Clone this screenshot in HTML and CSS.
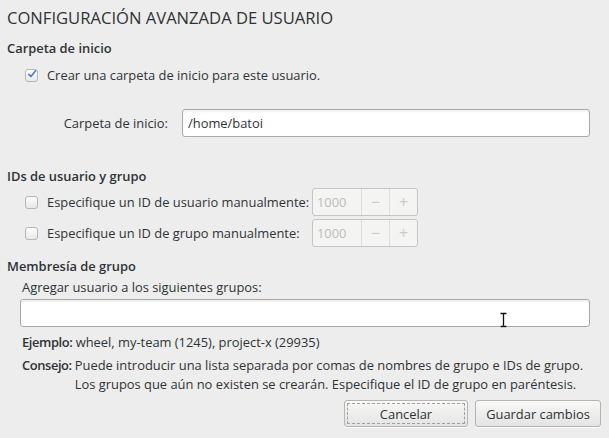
FILE: index.html
```html
<!DOCTYPE html>
<html lang="es">
<head>
<meta charset="utf-8">
<link rel="stylesheet" href="styles.css">
</head>
<body>
<div class="dialog">
  <h1 class="title">CONFIGURACIÓN AVANZADA DE USUARIO</h1>

  <h2 class="section">Carpeta de inicio</h2>
  <label class="check-row home-check">
    <span class="check checked">
      <svg viewBox="0 0 14 14" width="14" height="14"><path d="M2.5 7.5 L5.5 10.5 L12 2.5" fill="none" stroke="#3a7bd5" stroke-width="2.2" stroke-linecap="round" stroke-linejoin="round"/></svg>
    </span>
    <span class="check-text">Crear una carpeta de inicio para este usuario.</span>
  </label>
  <div class="home-row">
    <span class="home-label">Carpeta de inicio:</span>
    <div class="entry home-entry">/home/batoi</div>
  </div>

  <h2 class="section ids">IDs de usuario y grupo</h2>
  <div class="id-grid">
    <label class="check-row">
      <span class="check"></span>
      <span class="check-text">Especifique un ID de usuario manualmente:</span>
    </label>
    <div class="spin">
      <span class="spin-value">1000</span>
      <span class="spin-btn">−</span>
      <span class="spin-btn">+</span>
    </div>
    <label class="check-row">
      <span class="check"></span>
      <span class="check-text">Especifique un ID de grupo manualmente:</span>
    </label>
    <div class="spin">
      <span class="spin-value">1000</span>
      <span class="spin-btn">−</span>
      <span class="spin-btn">+</span>
    </div>
  </div>

  <h2 class="section groups">Membresía de grupo</h2>
  <div class="group-block">
    <p class="group-label">Agregar usuario a los siguientes grupos:</p>
    <div class="entry group-entry">
      <span class="ibeam">
        <svg viewBox="0 0 9 16" width="9" height="16"><path d="M1.5 1.5 H7.5 M4.5 1.5 V14.5 M1.5 14.5 H7.5" fill="none" stroke="#fff" stroke-width="3"/><path d="M1.5 1.5 H7.5 M4.5 1.5 V14.5 M1.5 14.5 H7.5" fill="none" stroke="#111" stroke-width="1.3"/></svg>
      </span>
    </div>
    <p class="hint"><b>Ejemplo:</b> wheel, my-team (1245), project-x (29935)</p>
    <div class="hint tip">
      <b>Consejo:</b>
      <span>Puede introducir una lista separada por comas de nombres de grupo e IDs de grupo. Los grupos que aún no existen se crearán. Especifique el ID de grupo en paréntesis.</span>
    </div>
  </div>

  <div class="actions">
    <button class="btn btn-focus">Cancelar</button>
    <button class="btn">Guardar cambios</button>
  </div>
</div>
</body>
</html>
```

FILE: styles.css
```css
* { box-sizing: border-box; }
html, body { margin: 0; padding: 0; }
body {
  background: #ededed;
  color: #2e3436;
  font-family: "Open Sans", "DejaVu Sans", sans-serif;
  font-size: 12.9px;
  width: 609px;
  height: 438px;
  overflow: hidden;
}
.dialog {
  padding: 9px 8px 0 7px;
  display: flex;
  flex-direction: column;
}
.title {
  margin: 0;
  font-size: 16.6px;
  font-weight: 400;
  line-height: 18px;
}
.section {
  margin: 13px 0 0 0;
  font-size: 12.9px;
  font-weight: 600;
  line-height: 16px;
}
.check-row {
  display: flex;
  align-items: center;
  gap: 9px;
  line-height: 16px;
}
.home-check { margin: 11px 0 0 18px; }
.check {
  width: 13px;
  height: 13px;
  border: 1px solid #b6b6b3;
  border-radius: 3px;
  background: linear-gradient(#fdfdfd, #e8e8e7);
  display: flex;
  align-items: center;
  justify-content: center;
  flex: none;
}
.check svg { margin-top: -2px; margin-left: 1px; }
.home-row {
  display: flex;
  align-items: center;
  margin: 26px 11px 0 0;
}
.home-label {
  width: 161px;
  text-align: right;
}
.entry {
  background: #fff;
  border: 1px solid #a9aaa8;
  border-radius: 3px;
  box-shadow: inset 0 2px 2px rgba(0,0,0,0.06);
  height: 28px;
}
.home-entry {
  margin-left: 14px;
  flex: 1;
  padding: 0 5px;
  display: flex;
  align-items: center;
}
.ids { margin-top: 31px; }
.id-grid {
  display: grid;
  grid-template-columns: 287px auto;
  row-gap: 3px;
  margin: 4px 0 0 18px;
  align-items: center;
  justify-content: start;
}
.spin {
  display: flex;
  width: 106px;
  height: 28px;
  border: 1px solid #c5c5c3;
  border-radius: 3px;
  background: #f4f4f3;
  color: #bdbdbb;
}
.spin-value {
  width: 48px;
  display: flex;
  align-items: center;
  padding-left: 4px;
}
.spin-btn {
  width: 28px;
  border-left: 1px solid #dcdcda;
  display: flex;
  align-items: center;
  justify-content: center;
  font-size: 16px;
  color: #cacac8;
}
.groups { margin-top: 11px; }
.group-block {
  margin: 5px 11px 0 13px;
  display: flex;
  flex-direction: column;
}
.group-label {
  margin: 0 0 0 2px;
  line-height: 16px;
}
.group-entry {
  margin: 4px 0 0 0;
  position: relative;
}
.ibeam {
  position: absolute;
  left: 478px;
  top: 12px;
}
.hint {
  margin: 0 0 0 2px;
  line-height: 19px;
}
.group-entry + .hint { margin-top: 6px; }
.hint b { font-weight: 600; letter-spacing: -0.4px; }
.tip {
  display: flex;
  gap: 3px;
  margin-top: 4px;
  line-height: 19px;
}
.tip span { flex: 1; }
.actions {
  display: flex;
  justify-content: flex-end;
  gap: 7px;
  margin: 6px 0 0 0;
}
.btn {
  font: inherit;
  color: #2e3436;
  height: 27px;
  border: 1px solid #b4b5b3;
  border-radius: 3px;
  background: linear-gradient(#f8f8f7, #e4e4e2);
  box-shadow: 0 1px 0 rgba(255,255,255,0.8);
  padding: 0 10px;
}
.btn-focus {
  width: 124px;
  outline: 1px dashed #a0a09e;
  outline-offset: -4px;
}
.btn:not(.btn-focus) { width: 126px; }
```
